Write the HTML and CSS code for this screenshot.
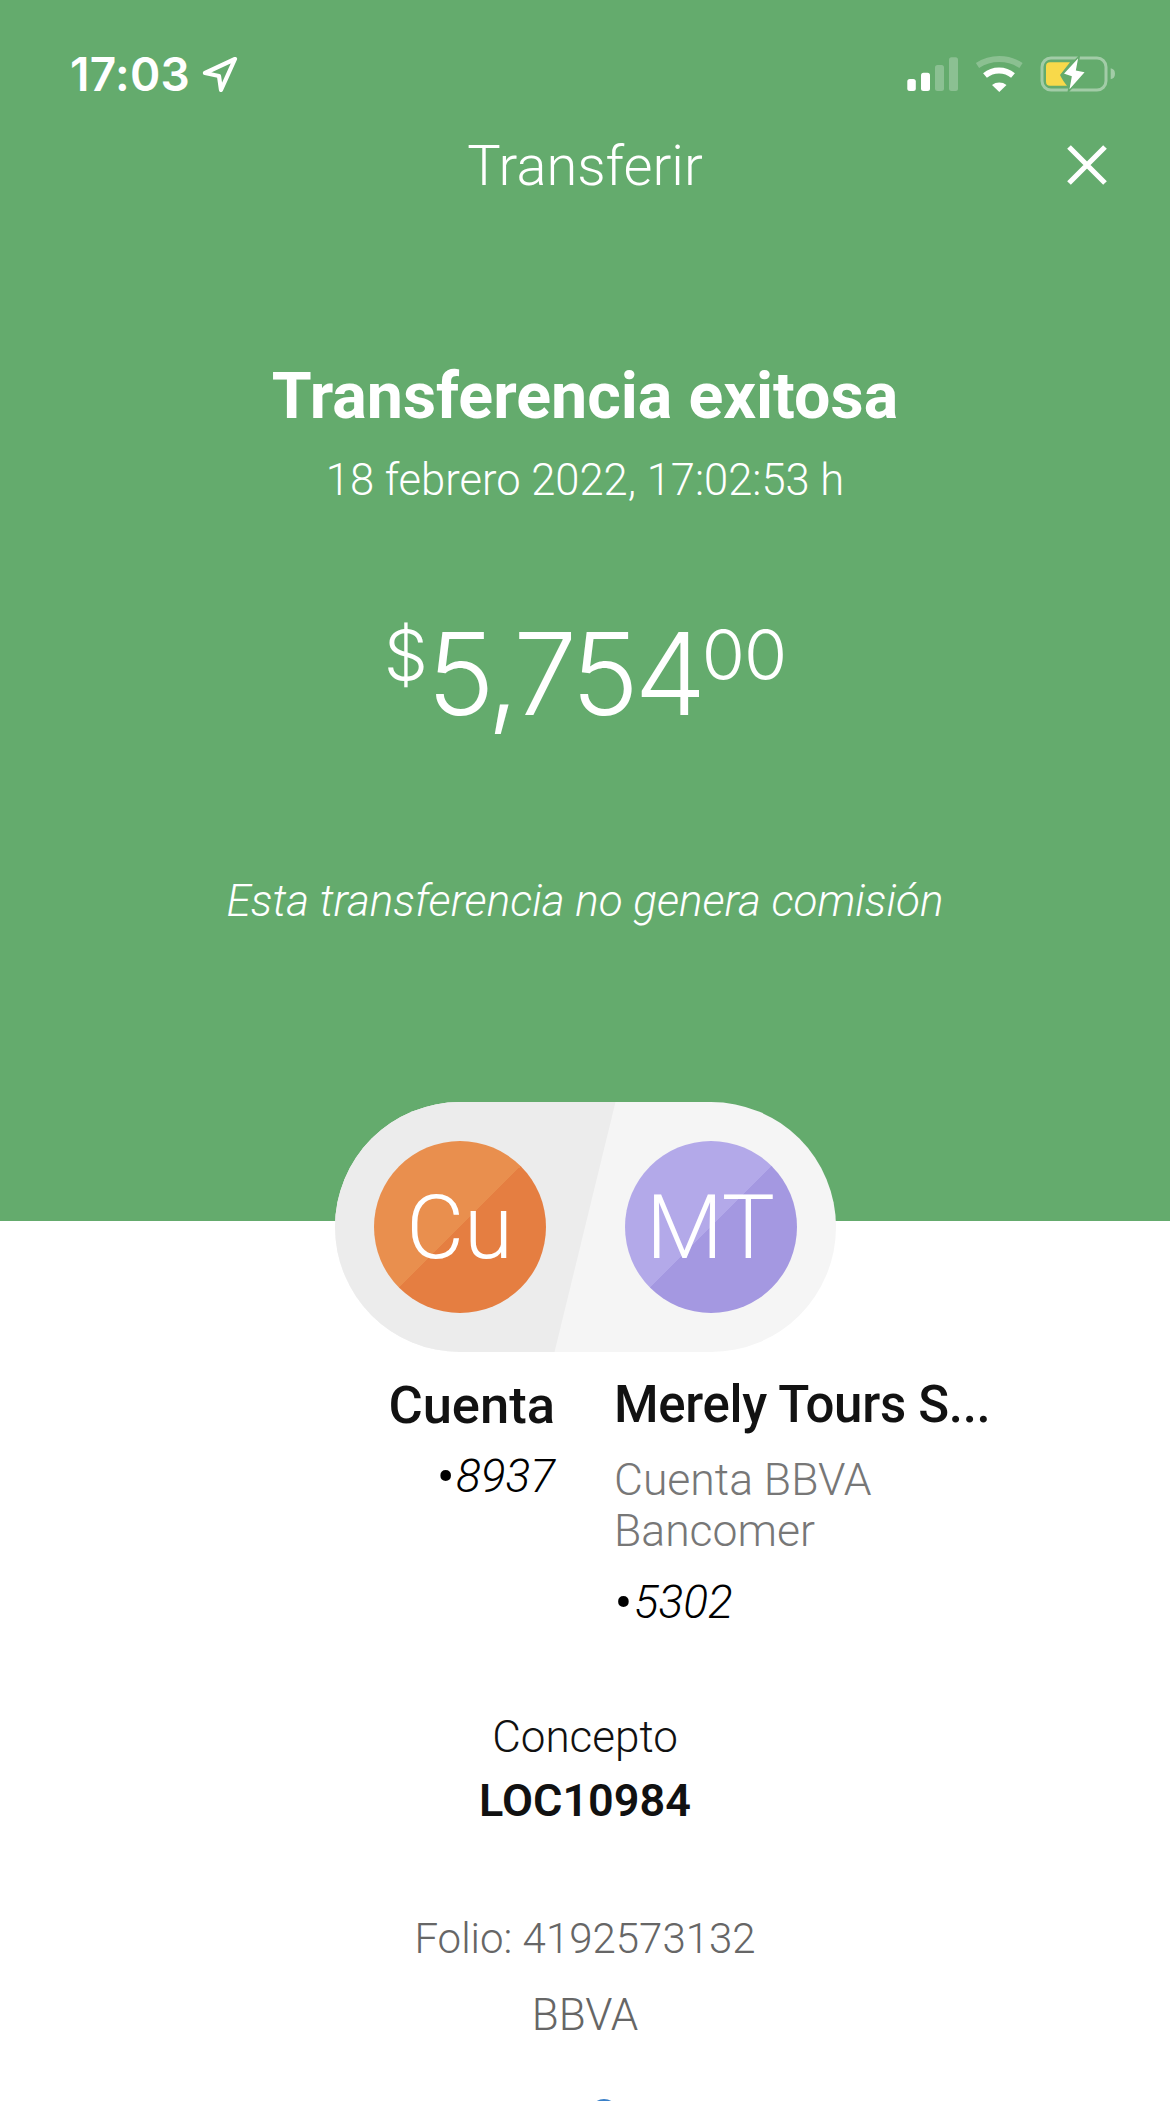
FILE: index.html
```html
<!DOCTYPE html>
<html lang="es">
<head>
<meta charset="utf-8">
<title>Transferir</title>
<link rel="stylesheet" href="styles.css">
</head>
<body>
<div class="screen">
  <header class="hero">
    <div class="status">
      <div class="status-left">
        <span class="time">17:03</span>
        <svg class="loc" viewBox="0 0 36 36" width="36" height="36"><path d="M33 3 3 17l14 3 2 14z" fill="none" stroke="#fff" stroke-width="4.2" stroke-linejoin="round"/></svg>
      </div>
      <svg class="status-icons" viewBox="0 0 208 36" width="208" height="36">
        <g fill="#fff"><rect x="0.300" y="23" width="8.500" height="12" rx="2.500"/><rect x="14" y="16.700" width="9" height="18.300" rx="2.500"/></g>
        <g fill="#fff" opacity=".25"><rect x="28" y="9" width="9" height="26" rx="2.500"/><rect x="42" y="1.300" width="9" height="33.700" rx="2.500"/></g>
        <path d="M70.500 9.500A40 40 0 0 1 114 9.500" fill="none" stroke="#fff" stroke-opacity=".25" stroke-width="6"/>
        <path d="M78 19.500A22 22 0 0 1 106 19.500" fill="none" stroke="#fff" stroke-width="6"/>
        <path d="M85 29A12 12 0 0 1 99.500 29L92.300 36z" fill="#fff"/>
        <rect x="135" y="2" width="64" height="32" rx="9" fill="none" stroke="#fff" stroke-opacity=".4" stroke-width="3"/>
        <path d="M203.700 12.300c3 .5 4.300 2.500 4.300 5.500s-1.300 5-4.300 5.500z" fill="#fff" opacity=".4"/>
        <path d="M143 6.300h20L153 19c1 2 3 6 7 10.700h-17a4 4 0 0 1-4-4V10.300a4 4 0 0 1 4-4z" fill="#f8d94a"/>
        <path d="M172.300 0 155.700 18l8.300 2.700-2.700 15L179 15.700 169.700 14z" fill="#fff" stroke="#64ab6d" stroke-width="1.500"/>
      </svg>
    </div>
    <div class="nav">
      <h1 class="nav-title">Transferir</h1>
      <svg class="close" viewBox="0 0 42 42" width="42" height="42"><path d="M3 3 39 39M39 3 3 39" stroke="#fff" stroke-width="5.200"/></svg>
    </div>
    <h2 class="headline">Transferencia exitosa</h2>
    <p class="stamp">18 febrero 2022, 17:02:53 h</p>
    <p class="amount"><sup class="cur">$</sup>5,754<sup class="cents">00</sup></p>
    <p class="fee">Esta transferencia no genera comisión</p>
  </header>

  <div class="pill">
    <div class="avatar orange">Cu</div>
    <div class="avatar purple">MT</div>
  </div>

  <section class="parties">
    <div class="party from">
      <div class="party-name">Cuenta</div>
      <div class="acct"><span class="dot">•</span>8937</div>
    </div>
    <div class="party to">
      <div class="party-name">Merely Tours S...</div>
      <div class="bank">Cuenta BBVA<br>Bancomer</div>
      <div class="acct"><span class="dot">•</span>5302</div>
    </div>
  </section>

  <section class="concept">
    <div class="concept-label">Concepto</div>
    <div class="concept-value">LOC10984</div>
  </section>

  <section class="meta">
    <div class="meta-line">Folio: 4192573132</div>
    <div class="meta-line bank-name">BBVA</div>
  </section>
  <div class="help"></div>
</div>
</body>
</html>
```
FILE: styles.css
```css
* { box-sizing: border-box; margin: 0; padding: 0; }
html, body { background: #fff; }
.screen {
  width: 1170px;
  height: 2101px;
  overflow: hidden;
  font-family: "Roboto", "Liberation Sans", sans-serif;
  color: #121212;
}
.hero {
  height: 1221px;
  background: #64ab6d;
  color: #fff;
  text-align: center;
  font-weight: 300;
}
.status {
  display: flex;
  justify-content: space-between;
  align-items: center;
  height: 102px;
  padding: 46px 55px 0 70px;
}
.status-left { display: flex; align-items: center; gap: 12px; }
.time { font-family: "Inter", sans-serif; font-weight: 600; font-size: 46px; line-height: 56px; letter-spacing: .3px; }
.status-icons { display: block; }
.nav { position: relative; height: 60px; margin-top: 34px; }
.nav-title { font-size: 56px; line-height: 60px; font-weight: 300; }
.close { position: absolute; right: 62px; top: 8px; }
.headline { margin-top: 165px; font-size: 64.500px; line-height: 70px; font-weight: 700; }
.stamp { margin-top: 25px; font-size: 43.500px; line-height: 50px; }
.amount { margin-top: 103px; font-size: 114px; line-height: 130px; font-family: "Inter", sans-serif; font-weight: 300; letter-spacing: -4.500px; }
.amount sup { font-size: 70px; line-height: 0; vertical-align: 35px; letter-spacing: -1px; }
.fee { margin-top: 137px; font-size: 44px; line-height: 50px; font-style: italic; }

.pill {
  position: relative;
  z-index: 1;
  display: flex;
  justify-content: space-between;
  align-items: center;
  width: 501px;
  height: 250px;
  margin: -119px auto 0;
  padding: 0 39px;
  border-radius: 125px;
  overflow: hidden;
  background: #f5f5f5;
}
.pill::before {
  content: "";
  position: absolute;
  inset: 0;
  background: #ececec;
  clip-path: polygon(0 0, 281px 0, 220px 100%, 0 100%);
}
.avatar {
  position: relative;
  width: 172px;
  height: 172px;
  border-radius: 50%;
  display: flex;
  align-items: center;
  justify-content: center;
  color: #fff;
  font-size: 89px;
  font-weight: 300;
}
.orange { background: linear-gradient(135deg, #e98f4e 50%, #e57e41 50%); }
.purple { background: linear-gradient(135deg, #b3a9e9 50%, #a498e1 50%); }

.parties {
  display: grid;
  grid-template-columns: 555px 372px;
  column-gap: 59px;
  margin-top: 26px;
}
.from { text-align: right; }
.party-name { font-size: 51px; line-height: 54px; font-weight: 500; white-space: nowrap; }
.from .party-name { font-size: 52.500px; }
.to .party-name { letter-spacing: -.3px; }
.acct { font-size: 46px; line-height: 50px; font-style: italic; font-weight: 300; color: #000; margin-top: 19px; }
.dot { font-style: normal; font-size: 58px; line-height: 0; vertical-align: -4px; margin-right: 1px; }
.bank { font-size: 44.500px; line-height: 51px; font-weight: 300; color: #777; margin-top: 23px; }
.bank + .acct { margin-top: 20px; }

.concept { text-align: center; margin-top: 85px; }
.concept-label { font-size: 44px; line-height: 50px; font-weight: 300; color: #111; }
.concept-value { font-size: 45px; line-height: 50px; font-weight: 600; color: #111; margin-top: 14px; }

.meta { text-align: center; margin-top: 88px; color: #666; }
.meta-line { font-size: 42px; line-height: 50px; font-weight: 300; margin-bottom: 26px; }
.bank-name { font-size: 44px; }
.help { width: 28px; height: 28px; border-radius: 50%; background: #3a80c8; margin: 59px 0 0 590px; }
```
